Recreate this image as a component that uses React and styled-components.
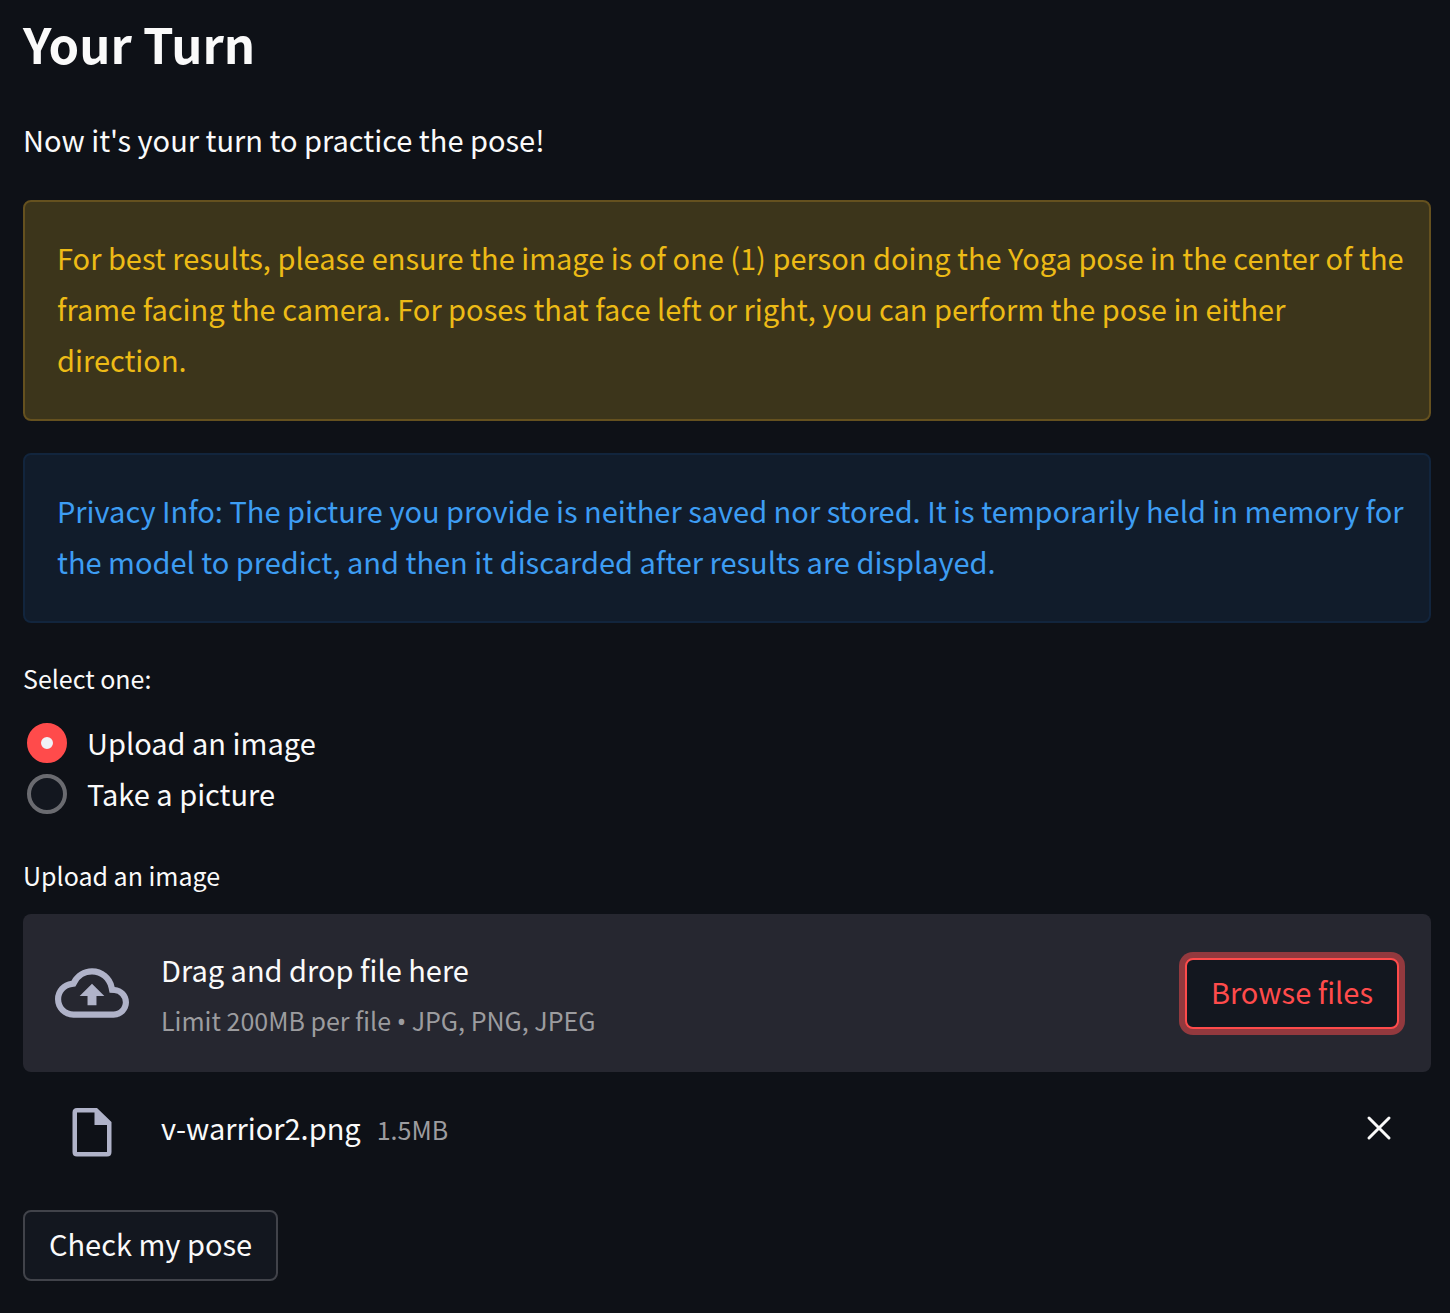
import React, { useState } from "react";
import styled, { createGlobalStyle } from "styled-components";

const GlobalStyle = createGlobalStyle`
  *, *::before, *::after { box-sizing: border-box; }
  body {
    margin: 0;
    background: #0e1117;
    color: #fafafa;
    font-family: "Noto Sans CJK SC", "Noto Sans", sans-serif;
    font-size: 29px;
    line-height: 51px;
  }
  button, input { font: inherit; }
`;

const Page = styled.main`
  display: flex;
  flex-direction: column;
  padding: 9px 19px 32px 23px;
`;

const Title = styled.h1`
  margin: 0;
  font-size: 49px;
  line-height: 68px;
  font-weight: 700;
`;

const Intro = styled.p`
  margin: 37px 0 35px;
`;

const tones = {
  warning: { text: "#edbb16", fill: "#3c351b", edge: "#65511f" },
  info: { text: "#3d9df3", fill: "#111c2b", edge: "#12253d" },
};

const Alert = styled.div`
  margin-bottom: 32px;
  padding: 30px 20px 34px 32px;
  border: 2px solid ${(p) => tones[p.$tone].edge};
  border-radius: 8px;
  background: ${(p) => tones[p.$tone].fill};
  color: ${(p) => tones[p.$tone].text};

  p { margin: 0; }
`;

const Choices = styled.fieldset`
  margin: 0 0 33px;
  padding: 0;
  border: 0;
`;

const Caption = styled.legend`
  padding: 0;
  font-size: 25px;
  line-height: 46px;
  margin-bottom: 16px;
`;

const Choice = styled.label`
  display: flex;
  align-items: center;
  gap: 20px;
  width: fit-content;
  padding-left: 4px;
  cursor: pointer;
`;

const Radio = styled.input`
  appearance: none;
  flex: none;
  width: 40px;
  height: 40px;
  margin: 0;
  border: 4px solid #6a6b70;
  border-radius: 50%;
  background: #13171f;

  &:checked {
    border: 14px solid #ff4b4b;
    background: #f0f2f6;
  }
`;

const UploadLabel = styled.label`
  font-size: 25px;
  line-height: 46px;
  margin-bottom: 16px;
`;

const DropZone = styled.section`
  display: flex;
  align-items: center;
  padding: 26px 32px;
  border-radius: 8px;
  background: #262730;
`;

const IconSlot = styled.span`
  display: flex;
  flex: none;
  justify-content: center;
  width: 74px;
  margin-right: 32px;
  color: #b0b3c9;
`;

const DropText = styled.div`
  display: flex;
  flex-direction: column;
  flex: 1;
  padding-top: 4px;
`;

const Small = styled.span`
  font-size: 25px;
  color: #9c9c9f;
`;

const Bullet = styled.span`
  font-family: "Noto Sans", sans-serif;
  line-height: 1;
`;

const Button = styled.button`
  padding: 6px 24px 10px;
  border: 2px solid ${(p) => (p.$active ? "#ff4b4b" : "#41434a")};
  border-radius: 8px;
  background: #13171f;
  color: ${(p) => (p.$active ? "#ff4b4b" : "#fafafa")};
  box-shadow: ${(p) => (p.$active ? "0 0 0 6px rgba(255, 75, 75, 0.5)" : "none")};
  cursor: pointer;
`;

const FileRow = styled.div`
  display: flex;
  align-items: center;
  margin: 27px 0 53px;
  padding: 0 32px;

  ${IconSlot} { padding-top: 8px; }
`;

const FileInfo = styled.div`
  display: flex;
  align-items: baseline;
  gap: 16px;
`;

const RemoveButton = styled.button`
  display: flex;
  margin-left: auto;
  padding: 0;
  border: 0;
  background: none;
  color: #fafafa;
  cursor: pointer;
`;

const Actions = styled.div`
  display: flex;
`;

const CloudIcon = () => (
  <svg width="74" height="50" viewBox="0 4 24 16" fill="currentColor" aria-hidden="true">
    <path d="M19.35 10.04A7.49 7.49 0 0012 4C9.11 4 6.6 5.64 5.35 8.04A5.994 5.994 0 000 14c0 3.31 2.69 6 6 6h13c2.76 0 5-2.24 5-5 0-2.64-2.05-4.78-4.65-4.96zM19 18H6c-2.21 0-4-1.79-4-4 0-2.05 1.53-3.76 3.56-3.97l1.07-.11.5-.95A5.469 5.469 0 0112 6c2.62 0 4.88 1.86 5.39 4.43l.3 1.5 1.53.11A2.98 2.98 0 0122 15c0 1.65-1.35 3-3 3zM8 13h2.55v3h2.9v-3H16l-4-4z" />
  </svg>
);

const FileIcon = () => (
  <svg width="40" height="50" viewBox="0 0 40 50" fill="currentColor" aria-hidden="true">
    <path
      fillRule="evenodd"
      d="M5 1H25L39.5 15V45Q39.5 49.5 35 49.5H5Q.5 49.5 .5 45V5.5Q.5 1 5 1ZM5 5.5V45H35V18H22.5V5.5Z"
    />
  </svg>
);

const CloseIcon = () => (
  <svg width="40" height="40" viewBox="0 0 40 40" stroke="currentColor" strokeWidth="3" strokeLinecap="round" aria-hidden="true">
    <path d="M10 10l20 20M30 10L10 30" />
  </svg>
);

export default function App() {
  const [mode, setMode] = useState("upload");
  return (
    <>
      <GlobalStyle />
      <Page>
        <Title>Your Turn</Title>
        <Intro>Now it's your turn to practice the pose!</Intro>
        <Alert $tone="warning" role="alert">
          <p>
            For best results, please ensure the image is of one (1) person doing the Yoga pose in the
            center of the frame facing the camera. For poses that face left or right, you can perform
            the pose in either direction.
          </p>
        </Alert>
        <Alert $tone="info" role="alert">
          <p>
            Privacy Info: The picture you provide is neither saved nor stored. It is temporarily held
            in memory for the model to predict, and then it discarded after results are displayed.
          </p>
        </Alert>
        <Choices>
          <Caption>Select one:</Caption>
          <Choice>
            <Radio type="radio" name="mode" checked={mode === "upload"} onChange={() => setMode("upload")} />
            Upload an image
          </Choice>
          <Choice>
            <Radio type="radio" name="mode" checked={mode === "camera"} onChange={() => setMode("camera")} />
            Take a picture
          </Choice>
        </Choices>
        <UploadLabel htmlFor="browse">Upload an image</UploadLabel>
        <DropZone>
          <IconSlot><CloudIcon /></IconSlot>
          <DropText>
            <span>Drag and drop file here</span>
            <Small>Limit 200MB per file <Bullet>•</Bullet> JPG, PNG, JPEG</Small>
          </DropText>
          <Button id="browse" type="button" $active>Browse files</Button>
        </DropZone>
        <FileRow>
          <IconSlot><FileIcon /></IconSlot>
          <FileInfo>
            <span>v-warrior2.png</span>
            <Small>1.5MB</Small>
          </FileInfo>
          <RemoveButton type="button" aria-label="Remove file"><CloseIcon /></RemoveButton>
        </FileRow>
        <Actions>
          <Button type="button">Check my pose</Button>
        </Actions>
      </Page>
    </>
  );
}
